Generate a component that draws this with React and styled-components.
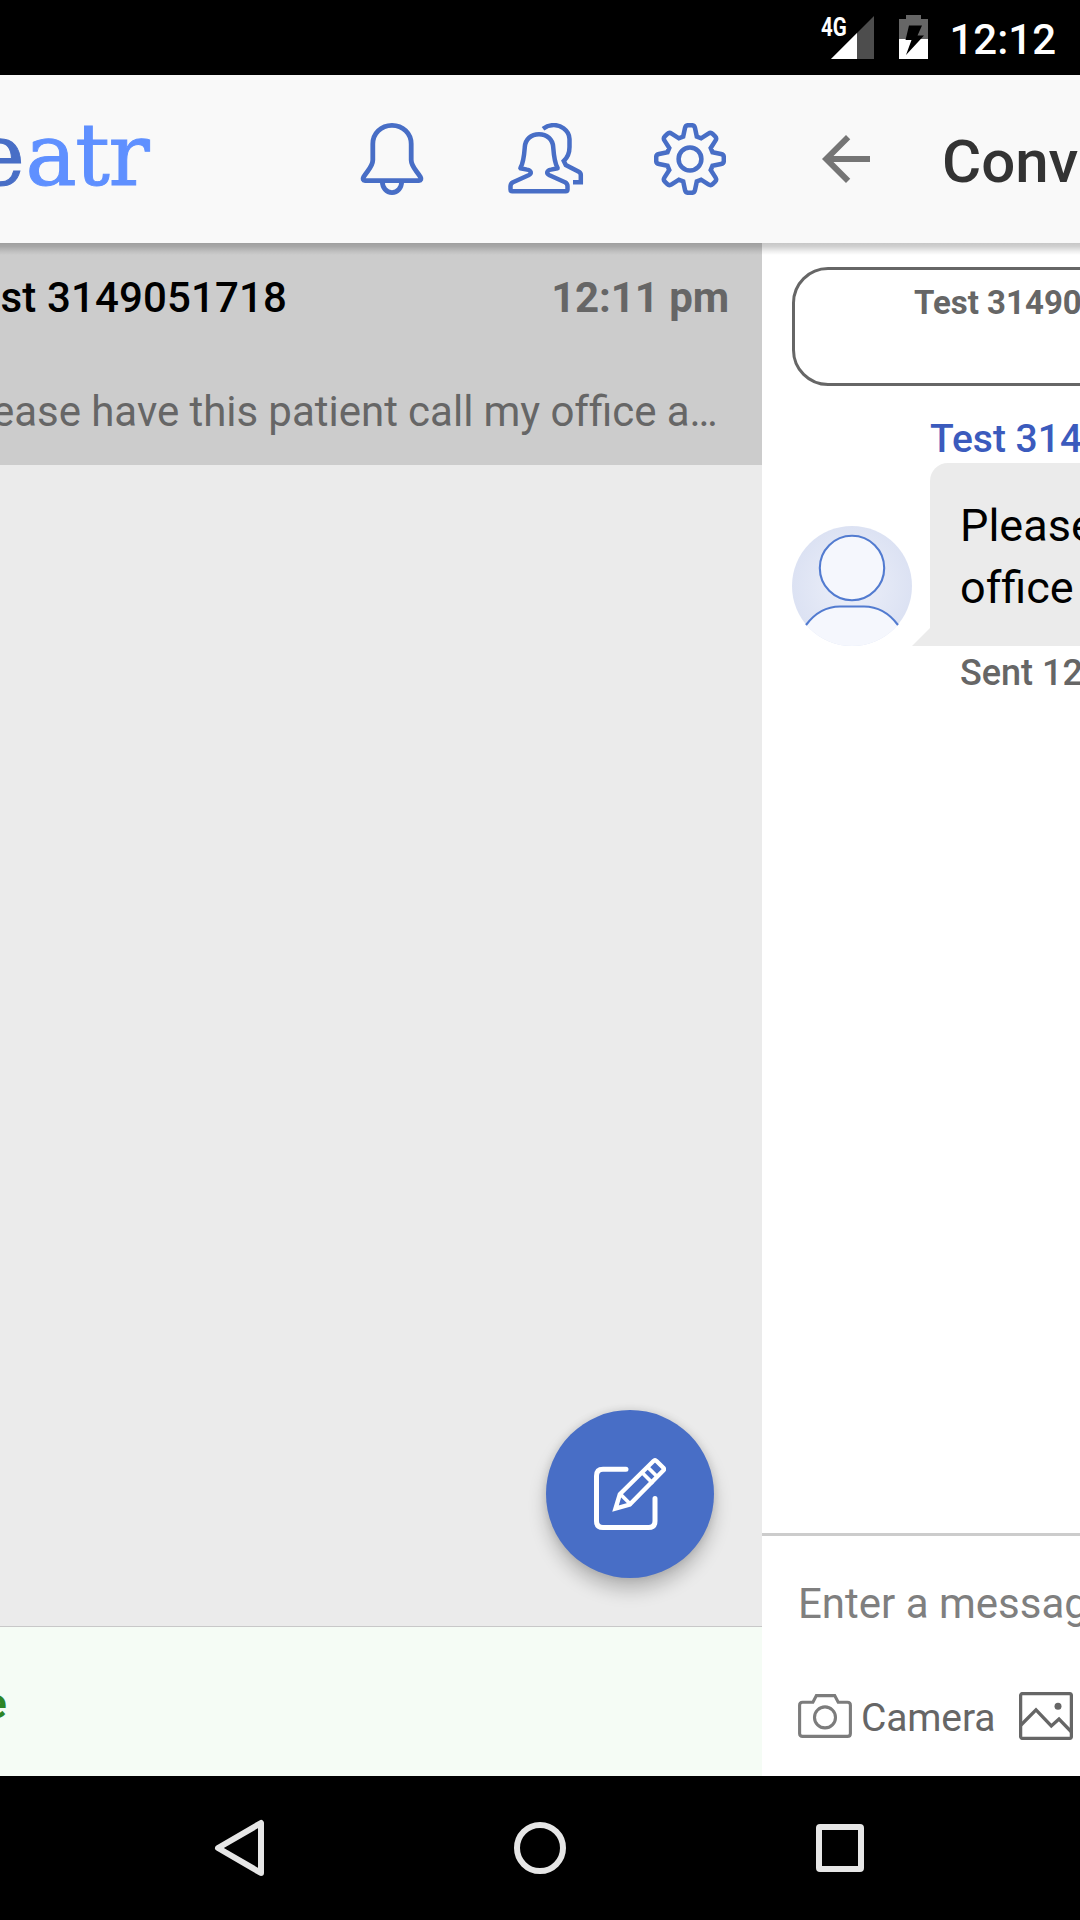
import React from 'react';
import styled, { createGlobalStyle } from 'styled-components';

const GlobalStyle = createGlobalStyle`
  * { box-sizing: border-box; }
  body { margin: 0; background: #000; font-family: Roboto, "Noto Sans", sans-serif; }
  svg { display: block; flex: none; }
`;

const Screen = styled.div`
  width: 1080px;
  height: 1920px;
  display: flex;
  flex-direction: column;
  overflow: hidden;
  background: #000;
`;

const StatusBar = styled.header`
  height: 75px;
  flex: none;
  display: flex;
  justify-content: flex-end;
  align-items: flex-start;
  padding: 15px 24px 0 0;
  color: #fff;
`;

const Signal = styled.div`
  position: relative;
  width: 53px;
  height: 44px;
  margin-right: 25px;
`;

const NetworkLabel = styled.span`
  position: absolute;
  left: 0;
  top: -3px;
  font-size: 26px;
  line-height: 30px;
  font-weight: 700;
  transform: scaleX(0.79);
  transform-origin: left;
`;

const Clock = styled.time`
  margin-left: 21px;
  font-size: 42px;
  line-height: 50px;
  font-weight: 500;
`;

const Pages = styled.main`
  flex: 1;
  display: grid;
  grid-template-columns: 762px 318px;
  min-height: 0;
`;

const Page = styled.section`
  display: flex;
  flex-direction: column;
  min-width: 0;
  overflow: hidden;
  background: ${(p) => p.$background};
`;

const Toolbar = styled.div`
  position: relative;
  z-index: 1;
  height: 168px;
  flex: none;
  display: flex;
  align-items: center;
  padding: ${(p) => p.$padding};
  background: #f9f9f9;

  &::after {
    content: '';
    position: absolute;
    left: 0;
    right: 0;
    top: 100%;
    height: 12px;
    background: linear-gradient(
      rgba(0, 0, 0, 0.22),
      rgba(0, 0, 0, 0.18) 30%,
      rgba(0, 0, 0, 0.07) 68%,
      rgba(0, 0, 0, 0)
    );
  }
`;

const Logo = styled.div`
  margin: 0 auto 9px -26px;
  font: 400 86px/100px "DejaVu Serif", serif;
  letter-spacing: -1.4px;
  -webkit-text-stroke: 1px currentColor;
  color: #5f90ff;
  white-space: nowrap;
`;

const LogoDark = styled.span`
  margin-right: 2px;
  color: #486ec6;
`;

const Actions = styled.div`
  display: flex;
  align-items: center;
`;

const PeopleAction = styled.div`
  margin: 0 69px 0 79px;
`;

const Title = styled.h1`
  margin: 0 0 0 60px;
  font-size: 60px;
  line-height: 70px;
  font-weight: 500;
  color: #333;
  padding-top: 5px;
`;

const ThreadRow = styled.article`
  height: 222px;
  flex: none;
  padding: 30px 33px 0 0;
  background: #ccc;
  font-size: 42px;
  line-height: 50px;
  white-space: nowrap;
`;

const ThreadHead = styled.div`
  display: flex;
  justify-content: space-between;
`;

const ThreadName = styled.span`
  margin-left: -22px;
  font-weight: 500;
  letter-spacing: 0.12px;
  color: #000;
`;

const ThreadTime = styled.span`
  font-weight: 700;
  letter-spacing: -0.1px;
  color: #666;
`;

const Preview = styled.p`
  margin: 64px 0 0 -8px;
  word-spacing: -0.25px;
  color: #666;
`;

const Unjoined = styled.span`
  display: inline-block;
`;

const ThreadSpace = styled.div`
  flex: 1;
  display: flex;
  justify-content: flex-end;
  align-items: flex-end;
  padding: 0 48px 48px 0;
`;

const ComposeButton = styled.button`
  width: 168px;
  height: 168px;
  padding: 0;
  border: 0;
  border-radius: 50%;
  display: grid;
  place-items: center;
  background: #486ec6;
  box-shadow: 0 12px 18px rgba(0, 0, 0, 0.22), 0 0 9px rgba(0, 0, 0, 0.12);
`;

const OnlineBar = styled.footer`
  height: 150px;
  flex: none;
  display: flex;
  align-items: center;
  border-top: 1px solid #c8c8c8;
  background: #f5fcf5;
`;

const OnlineText = styled.span`
  margin: 5px 0 0 -16px;
  font-size: 42px;
  line-height: 50px;
  font-weight: 700;
  color: #2e8526;
`;

const Conversation = styled.div`
  flex: 1;
  padding: 24px 0 0 30px;
  white-space: nowrap;
`;

const Participants = styled.div`
  height: 119px;
  width: 400px;
  padding: 13px 0 0 119px;
  border: 3px solid #666;
  border-radius: 36px;
  font-size: 33px;
  line-height: 40px;
  font-weight: 700;
  color: #666;
`;

const Sender = styled.div`
  margin: 29px 0 0 138px;
  font-size: 39px;
  line-height: 48px;
  font-weight: 500;
  color: #3b5bbd;
`;

const MessageRow = styled.div`
  display: flex;
  align-items: flex-end;
`;

const Bubble = styled.div`
  flex: 1;
  height: 183px;
  padding: 32px 0 0 30px;
  border-top-left-radius: 18px;
  background: #ebebeb;
  font-size: 45px;
  line-height: 62px;
  color: #000;
`;

const MessageLine = styled.div``;

const Sent = styled.div`
  margin: 5px 0 0 168px;
  font-size: 36px;
  line-height: 44px;
  font-weight: 500;
  color: #666;
`;

const Composer = styled.div`
  height: 243px;
  flex: none;
  padding: 43px 0 0 36px;
  border-top: 3px solid #ccc;
  white-space: nowrap;
`;

const Placeholder = styled.div`
  font-size: 42px;
  line-height: 50px;
  color: #7f7f7f;
`;

const Attachments = styled.div`
  display: flex;
  align-items: center;
  height: 48px;
  margin-top: 63px;
`;

const AttachLabel = styled.span`
  width: 158px;
  margin-left: 9px;
  padding-top: 3px;
  font-size: 39px;
  line-height: 48px;
  letter-spacing: -0.15px;
  color: #666;
`;

const NavBar = styled.nav`
  height: 144px;
  flex: none;
  display: grid;
  grid-template-columns: repeat(3, 300px);
  justify-content: center;
  align-items: center;
  justify-items: center;
`;

const BLUE = '#486ec6';
const iconStroke = { fill: 'none', stroke: BLUE, strokeWidth: 4.8, strokeLinejoin: 'round' };

const SignalIcon = () => (
  <svg width="53" height="44" viewBox="0 0 53 44">
    <path d="M53 1V44H10Z" fill="#4d4d4d" />
    <path d="M36 18V44H10Z" fill="#fff" />
  </svg>
);

const BatteryIcon = () => (
  <svg width="29" height="44" viewBox="0 0 29 44">
    <path d="M7 0H22V4H29V24H0V4H7Z" fill="#666" />
    <path d="M0 24H29V44H0Z" fill="#fff" />
    <path d="M10 10.500H23L18.500 20.500H25L7 40L12.500 25H6.500Z" fill="#000" />
  </svg>
);

const BellIcon = () => (
  <svg width="72" height="72" viewBox="0 0 72 72" {...iconStroke}>
    <path d="M36 2.4C25 2.4 16.800 10.500 16.800 21V37C16.800 43.500 11.500 47.500 7.600 54C6.500 56 7 57.600 9 57.600H63C65 57.600 65.500 56 64.400 54C60.500 47.500 55.200 43.500 55.200 37V21C55.200 10.500 47 2.400 36 2.400Z" />
    <path d="M26.300 58C26.300 65 30.500 69.600 36 69.600S45.700 65 45.700 58" />
  </svg>
);

const PeopleIcon = () => (
  <svg width="78" height="72" viewBox="0 0 78 72" {...iconStroke} strokeWidth="4.5">
    <path d="M32 11.200C24 11.200 18.300 16.500 17.800 24C17.200 32 16.800 39 13.400 45.200L20 46.600C24.400 47.400 25 50.500 21.500 52.300L6 59.300C4.300 60.200 3.500 61.200 3.500 63V66.500Q3.500 68.300 5.300 68.300H58.700Q60.500 68.300 60.500 66.500V63C60.500 61.200 59.700 60.200 58 59.300L42.500 52.300C39 50.500 39.600 47.400 44 46.600L50.600 45.200C47.200 39 46.800 32 46.200 24C45.700 16.500 40 11.200 32 11.200Z" />
    <path d="M36 5.700C42.500 1 51 1 56.500 5.200C61 8.500 62.500 11.500 62.500 16V24C62.500 30.500 60.500 34.500 56.800 38L58.800 42L71.800 48.800Q73.800 50 73.800 52V59.300H66" strokeLinejoin="miter" />
  </svg>
);

const toothPoints = [
  ['', [-6.8, -22.5]],
  ['L', [-5, -31]],
  ['Q', [-4.4, -33.8], [-1.8, -33.8]],
  ['L', [1.8, -33.8]],
  ['Q', [4.4, -33.8], [5, -31]],
  ['L', [6.8, -22.5]],
];

const gearPath =
  Array.from({ length: 8 }, (_, i) => {
    const a = (i * Math.PI) / 4;
    const turn = ([x, y]) =>
      `${(36 + x * Math.cos(a) - y * Math.sin(a)).toFixed(2)} ${(36 + x * Math.sin(a) + y * Math.cos(a)).toFixed(2)}`;
    return toothPoints
      .map(([cmd, ...pts]) => `${cmd || (i ? 'L' : 'M')}${pts.map(turn).join(' ')}`)
      .join('');
  }).join('') + 'Z';

const GearIcon = () => (
  <svg width="72" height="72" viewBox="0 0 72 72" {...iconStroke} strokeWidth="4.5">
    <path d={gearPath} strokeLinejoin="miter" />
    <circle cx="36" cy="36" r="11.4" />
  </svg>
);

const BackIcon = () => (
  <svg width="72" height="72" viewBox="0 0 24 24">
    <path d="M20 11H7.830l5.590-5.590L12 4l-8 8 8 8 1.410-1.410L7.830 13H20v-2z" fill="#757575" />
  </svg>
);

const ComposeIcon = () => (
  <svg width="72" height="72" viewBox="0 0 72 72" fill="none" stroke="#fff" strokeLinecap="round" strokeLinejoin="round">
    <path d="M32 11.300H9Q2.500 11.300 2.500 18V63Q2.500 69.500 9 69.500H54.500Q61 69.500 61 63V40.500" strokeWidth="5" />
    <path d="M25.800 36.300L59.500 3Q61 1.600 62.500 3L69.300 9.800Q70.600 11.200 69.300 12.500L35.700 46.500L21.500 50.600Z" strokeWidth="4.400" strokeLinejoin="miter" />
    <path d="M27 36.800L36.300 46M48.500 15L58 24.500M54 9.500L63 18.500" strokeWidth="3.700" />
  </svg>
);

const AvatarIcon = () => (
  <svg width="120" height="120" viewBox="0 0 120 120">
    <defs>
      <radialGradient id="avatarShade">
        <stop offset="0" stopColor="#edf0f9" />
        <stop offset="1" stopColor="#dce2f3" />
      </radialGradient>
      <clipPath id="avatarClip">
        <circle cx="60" cy="60" r="60" />
      </clipPath>
    </defs>
    <g clipPath="url(#avatarClip)">
      <rect width="120" height="120" fill="url(#avatarShade)" />
      <path d="M14 99.500C23 87 34 80.500 48 80.500H72C86 80.500 97 87 106 99.500V120H14Z" fill="#f5f7fd" />
    </g>
    <circle cx="60" cy="42" r="32.200" fill="#f5f7fd" stroke="#527bd0" strokeWidth="2.100" />
    <path d="M14 99C23 87 34 80.500 48 80.500H72C86 80.500 97 87 106 99" fill="none" stroke="#527bd0" strokeWidth="2.100" />
  </svg>
);

const BubbleTail = () => (
  <svg width="18" height="18" viewBox="0 0 18 18">
    <path d="M18 0V18H0Z" fill="#ebebeb" />
  </svg>
);

const CameraIcon = () => (
  <svg width="54" height="44" viewBox="0 0 54 44" fill="none" stroke="#7c7c7c" strokeWidth="3.100">
    <path d="M4.600 8.200H14.900L18.400 1.600H36.700L40.200 8.200H49.400Q52.400 8.200 52.400 11.200V39.400Q52.400 42.400 49.400 42.400H4.600Q1.600 42.400 1.600 39.400V11.200Q1.600 8.200 4.600 8.200Z" />
    <circle cx="27" cy="23.400" r="10.500" />
  </svg>
);

const PictureIcon = () => (
  <svg width="54" height="48" viewBox="0 0 54 48" fill="none" stroke="#666" strokeWidth="3.300">
    <rect x="1.600" y="1.600" width="50.800" height="44.800" rx="2" />
    <path d="M2 33L17 17.800L32.300 34L40 27L52.500 40" />
    <circle cx="39" cy="14.300" r="3.500" fill="#666" stroke="none" />
  </svg>
);

const navStroke = { fill: 'none', stroke: '#e6e6e6', strokeWidth: 6, strokeLinejoin: 'round' };

export default function App() {
  return (
    <Screen>
      <GlobalStyle />
      <StatusBar>
        <Signal>
          <SignalIcon />
          <NetworkLabel>4G</NetworkLabel>
        </Signal>
        <BatteryIcon />
        <Clock>12:12</Clock>
      </StatusBar>

      <Pages>
        <Page $background="#ebebeb">
          <Toolbar $padding="0 36px 0 0">
            <Logo>
              <LogoDark>e</LogoDark>atr
            </Logo>
            <Actions>
              <BellIcon />
              <PeopleAction>
                <PeopleIcon />
              </PeopleAction>
              <GearIcon />
            </Actions>
          </Toolbar>
          <ThreadRow>
            <ThreadHead>
              <ThreadName>est 3149051718</ThreadName>
              <ThreadTime>12:11 pm</ThreadTime>
            </ThreadHead>
            <Preview>
              ease have this patient call my of<Unjoined>fice a…</Unjoined>
            </Preview>
          </ThreadRow>
          <ThreadSpace>
            <ComposeButton aria-label="Compose">
              <ComposeIcon />
            </ComposeButton>
          </ThreadSpace>
          <OnlineBar>
            <OnlineText>e</OnlineText>
          </OnlineBar>
        </Page>

        <Page $background="#fff">
          <Toolbar $padding="0 0 0 48px">
            <BackIcon />
            <Title>Conv</Title>
          </Toolbar>
          <Conversation>
            <Participants>Test 31490</Participants>
            <Sender>Test 314</Sender>
            <MessageRow>
              <AvatarIcon />
              <BubbleTail />
              <Bubble>
                <MessageLine>Please</MessageLine>
                <MessageLine>
                  of<Unjoined>fice</Unjoined>
                </MessageLine>
              </Bubble>
            </MessageRow>
            <Sent>Sent 12</Sent>
          </Conversation>
          <Composer>
            <Placeholder>Enter a messag</Placeholder>
            <Attachments>
              <CameraIcon />
              <AttachLabel>Camera</AttachLabel>
              <PictureIcon />
            </Attachments>
          </Composer>
        </Page>
      </Pages>

      <NavBar>
        <svg width="60" height="60" viewBox="0 0 60 60" {...navStroke}>
          <path d="M51 5V55L8 30Z" />
        </svg>
        <svg width="60" height="60" viewBox="0 0 60 60" {...navStroke}>
          <circle cx="30" cy="30" r="23" />
        </svg>
        <svg width="60" height="60" viewBox="0 0 60 60" {...navStroke}>
          <rect x="9" y="9" width="42" height="42" rx="1" />
        </svg>
      </NavBar>
    </Screen>
  );
}
